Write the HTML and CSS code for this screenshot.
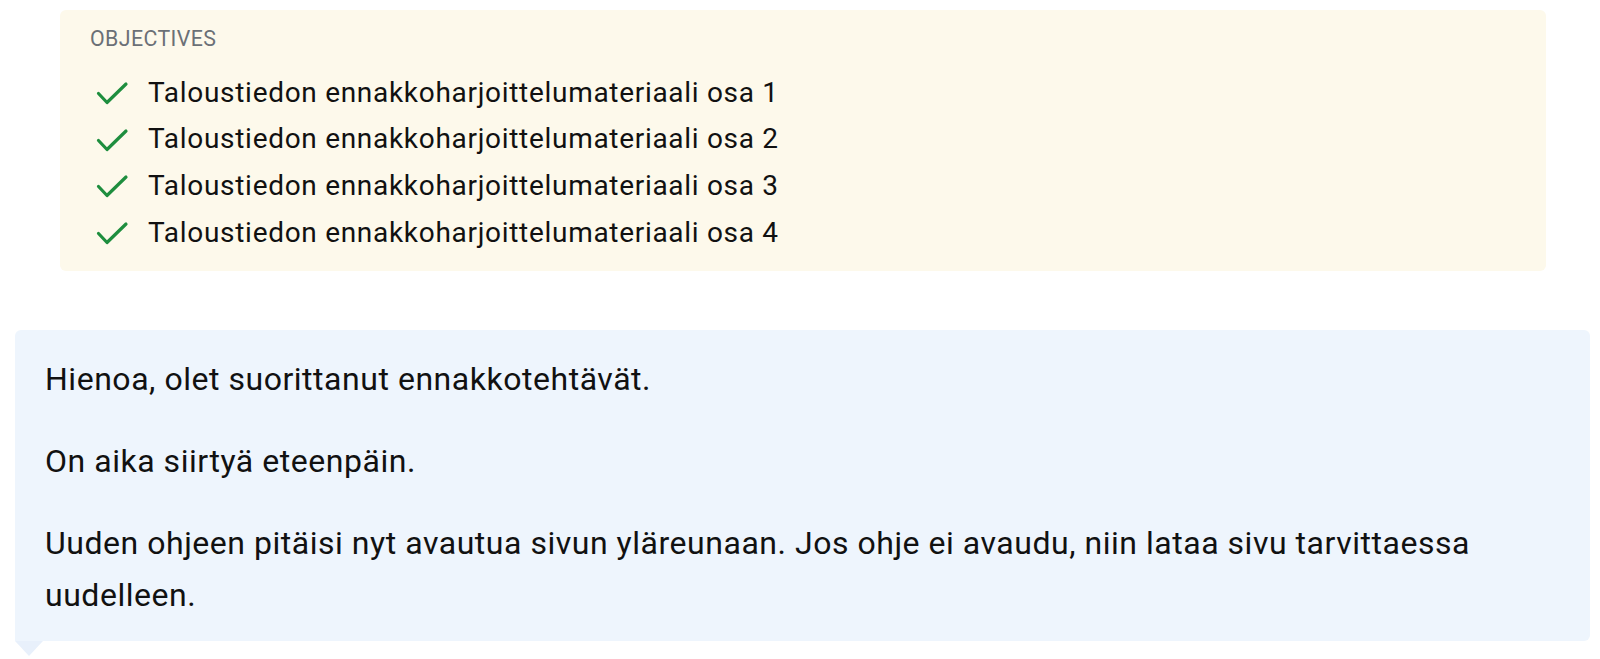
FILE: index.html
```html
<!DOCTYPE html>
<html lang="fi">
<head>
<meta charset="utf-8">
<title>Objectives</title>
<link rel="stylesheet" href="styles.css">
</head>
<body>
<div class="page">
  <section class="objectives">
    <div class="obj-title">OBJECTIVES</div>
    <ul class="obj-list">
      <li class="obj-item">
        <svg class="check" viewBox="0 0 40 40" width="40" height="40" aria-hidden="true"><path d="M8.5 20.5 L17 29.5 L36 11" fill="none" stroke="#1e8e3e" stroke-width="3.2" stroke-linecap="round" stroke-linejoin="round"/></svg>
        <span>Taloustiedon ennakkoharjoittelumateriaali osa 1</span>
      </li>
      <li class="obj-item">
        <svg class="check" viewBox="0 0 40 40" width="40" height="40" aria-hidden="true"><path d="M8.5 20.5 L17 29.5 L36 11" fill="none" stroke="#1e8e3e" stroke-width="3.2" stroke-linecap="round" stroke-linejoin="round"/></svg>
        <span>Taloustiedon ennakkoharjoittelumateriaali osa 2</span>
      </li>
      <li class="obj-item">
        <svg class="check" viewBox="0 0 40 40" width="40" height="40" aria-hidden="true"><path d="M8.5 20.5 L17 29.5 L36 11" fill="none" stroke="#1e8e3e" stroke-width="3.2" stroke-linecap="round" stroke-linejoin="round"/></svg>
        <span>Taloustiedon ennakkoharjoittelumateriaali osa 3</span>
      </li>
      <li class="obj-item">
        <svg class="check" viewBox="0 0 40 40" width="40" height="40" aria-hidden="true"><path d="M8.5 20.5 L17 29.5 L36 11" fill="none" stroke="#1e8e3e" stroke-width="3.2" stroke-linecap="round" stroke-linejoin="round"/></svg>
        <span>Taloustiedon ennakkoharjoittelumateriaali osa 4</span>
      </li>
    </ul>
  </section>

  <div class="message">
    <section class="bubble">
      <p>Hienoa, olet suorittanut ennakkotehtävät.</p>
      <p>On aika siirtyä eteenpäin.</p>
      <p>Uuden ohjeen pitäisi nyt avautua sivun yläreunaan. Jos ohje ei avaudu, niin lataa sivu tarvittaessa uudelleen.</p>
    </section>
    <svg class="tail" viewBox="0 0 28 15" width="28" height="15" aria-hidden="true"><path d="M0 0 H28 L14 15 Z" fill="#e8f0fb"/></svg>
  </div>
</div>
</body>
</html>
```

FILE: styles.css
```css
html, body {
  margin: 0;
  padding: 0;
  background: #ffffff;
}

body {
  font-family: Roboto, "Liberation Sans", Arial, sans-serif;
  color: #111111;
}

.page {
  display: flex;
  flex-direction: column;
  padding-top: 10px;
}

.objectives {
  margin: 0 54px 0 60px;
  background: #fdf9eb;
  border-radius: 6px;
  padding: 16px 30px 15px 30px;
}

.obj-title {
  font-size: 21.33px;
  line-height: 25px;
  color: #6b7076;
  letter-spacing: 0.4px;
}

.obj-list {
  list-style: none;
  margin: 18.6px 0 0 0;
  padding: 0;
  display: flex;
  flex-direction: column;
}

.obj-item {
  display: flex;
  align-items: center;
  gap: 18px;
  height: 46.67px;
  font-size: 28px;
  line-height: 46.67px;
  letter-spacing: 0.7px;
}

.check {
  flex: 0 0 40px;
  display: block;
}

.message {
  display: flex;
  flex-direction: column;
  align-items: flex-start;
  margin: 59px 10px 0 15px;
}

.bubble {
  align-self: stretch;
  background: #eef5fd;
  border-radius: 6px 6px 6px 0;
  padding: 23px 30px 20px 30px;
  font-size: 32px;
  line-height: 52px;
  letter-spacing: 0.53px;
}

.bubble p {
  margin: 0 0 30px 0;
}

.bubble p:last-of-type {
  margin-bottom: 0;
}

.tail {
  display: block;
  flex: 0 0 auto;
}
```
